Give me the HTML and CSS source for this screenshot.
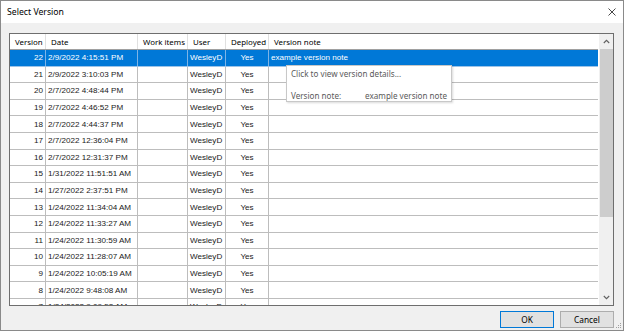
FILE: index.html
```html
<!DOCTYPE html>
<html lang="en">
<head>
    <meta charset="UTF-8">
    <title>Select Version</title>
    <link rel="stylesheet" href="styles.css">
</head>
<body>
    <div class="window">
        <div class="titlebar">
            <span class="title">Select Version</span>
            <svg class="close" width="8" height="8" viewBox="0 0 8 8">
                <path d="M0.5 0.5 L7.5 7.5 M7.5 0.5 L0.5 7.5" stroke="#333" stroke-width="0.9" fill="none"/>
            </svg>
        </div>

        <div class="body">
            <div class="grid-frame">
                <div class="grid">
                    <div class="row head">
                        <div class="cell">Version</div>
                        <div class="cell">Date</div>
                        <div class="cell">Work items</div>
                        <div class="cell">User</div>
                        <div class="cell">Deployed</div>
                        <div class="cell">Version note</div>
                    </div>
                    <div class="row selected">
                        <div class="cell num">22</div>
                        <div class="cell">2/9/2022 4:15:51 PM</div>
                        <div class="cell"></div>
                        <div class="cell">WesleyD</div>
                        <div class="cell mid">Yes</div>
                        <div class="cell">example version note</div>
                    </div>
                    <div class="row">
                        <div class="cell num">21</div>
                        <div class="cell">2/9/2022 3:10:03 PM</div>
                        <div class="cell"></div>
                        <div class="cell">WesleyD</div>
                        <div class="cell mid">Yes</div>
                        <div class="cell"></div>
                    </div>
                    <div class="row">
                        <div class="cell num">20</div>
                        <div class="cell">2/7/2022 4:48:44 PM</div>
                        <div class="cell"></div>
                        <div class="cell">WesleyD</div>
                        <div class="cell mid">Yes</div>
                        <div class="cell"></div>
                    </div>
                    <div class="row">
                        <div class="cell num">19</div>
                        <div class="cell">2/7/2022 4:46:52 PM</div>
                        <div class="cell"></div>
                        <div class="cell">WesleyD</div>
                        <div class="cell mid">Yes</div>
                        <div class="cell"></div>
                    </div>
                    <div class="row">
                        <div class="cell num">18</div>
                        <div class="cell">2/7/2022 4:44:37 PM</div>
                        <div class="cell"></div>
                        <div class="cell">WesleyD</div>
                        <div class="cell mid">Yes</div>
                        <div class="cell"></div>
                    </div>
                    <div class="row">
                        <div class="cell num">17</div>
                        <div class="cell">2/7/2022 12:36:04 PM</div>
                        <div class="cell"></div>
                        <div class="cell">WesleyD</div>
                        <div class="cell mid">Yes</div>
                        <div class="cell"></div>
                    </div>
                    <div class="row">
                        <div class="cell num">16</div>
                        <div class="cell">2/7/2022 12:31:37 PM</div>
                        <div class="cell"></div>
                        <div class="cell">WesleyD</div>
                        <div class="cell mid">Yes</div>
                        <div class="cell"></div>
                    </div>
                    <div class="row">
                        <div class="cell num">15</div>
                        <div class="cell">1/31/2022 11:51:51 AM</div>
                        <div class="cell"></div>
                        <div class="cell">WesleyD</div>
                        <div class="cell mid">Yes</div>
                        <div class="cell"></div>
                    </div>
                    <div class="row">
                        <div class="cell num">14</div>
                        <div class="cell">1/27/2022 2:37:51 PM</div>
                        <div class="cell"></div>
                        <div class="cell">WesleyD</div>
                        <div class="cell mid">Yes</div>
                        <div class="cell"></div>
                    </div>
                    <div class="row">
                        <div class="cell num">13</div>
                        <div class="cell">1/24/2022 11:34:04 AM</div>
                        <div class="cell"></div>
                        <div class="cell">WesleyD</div>
                        <div class="cell mid">Yes</div>
                        <div class="cell"></div>
                    </div>
                    <div class="row">
                        <div class="cell num">12</div>
                        <div class="cell">1/24/2022 11:33:27 AM</div>
                        <div class="cell"></div>
                        <div class="cell">WesleyD</div>
                        <div class="cell mid">Yes</div>
                        <div class="cell"></div>
                    </div>
                    <div class="row">
                        <div class="cell num">11</div>
                        <div class="cell">1/24/2022 11:30:59 AM</div>
                        <div class="cell"></div>
                        <div class="cell">WesleyD</div>
                        <div class="cell mid">Yes</div>
                        <div class="cell"></div>
                    </div>
                    <div class="row">
                        <div class="cell num">10</div>
                        <div class="cell">1/24/2022 11:28:07 AM</div>
                        <div class="cell"></div>
                        <div class="cell">WesleyD</div>
                        <div class="cell mid">Yes</div>
                        <div class="cell"></div>
                    </div>
                    <div class="row">
                        <div class="cell num">9</div>
                        <div class="cell">1/24/2022 10:05:19 AM</div>
                        <div class="cell"></div>
                        <div class="cell">WesleyD</div>
                        <div class="cell mid">Yes</div>
                        <div class="cell"></div>
                    </div>
                    <div class="row">
                        <div class="cell num">8</div>
                        <div class="cell">1/24/2022 9:48:08 AM</div>
                        <div class="cell"></div>
                        <div class="cell">WesleyD</div>
                        <div class="cell mid">Yes</div>
                        <div class="cell"></div>
                    </div>
                    <div class="row">
                        <div class="cell num">7</div>
                        <div class="cell">1/24/2022 9:09:52 AM</div>
                        <div class="cell"></div>
                        <div class="cell">WesleyD</div>
                        <div class="cell mid">Yes</div>
                        <div class="cell"></div>
                    </div>
                </div>

                <div class="scrollbar">
                    <div class="arrow">
                        <svg width="7" height="5" viewBox="0 0 7 5"><path d="M0.8 4 L3.5 1.3 L6.2 4" stroke="#606060" stroke-width="1.1" fill="none"/></svg>
                    </div>
                    <div class="track">
                        <div class="thumb"></div>
                    </div>
                    <div class="arrow">
                        <svg width="7" height="5" viewBox="0 0 7 5"><path d="M0.8 1 L3.5 3.7 L6.2 1" stroke="#606060" stroke-width="1.1" fill="none"/></svg>
                    </div>
                </div>

                <!-- hover tooltip over the note column -->
                <div class="tooltip">
                    <div class="tip-title">Click to view version details...</div>
                    <div class="tip-line">
                        <span>Version note:</span>
                        <span>example version note</span>
                    </div>
                </div>
            </div>

            <div class="actions">
                <button class="btn default">OK</button>
                <button class="btn">Cancel</button>
            </div>
        </div>

        <svg class="grip" width="7" height="7" viewBox="0 0 7 7">
            <rect x="5" y="1" width="1" height="1" fill="#a0a0a0"/>
            <rect x="3" y="3" width="1" height="1" fill="#a0a0a0"/>
            <rect x="5" y="3" width="1" height="1" fill="#a0a0a0"/>
            <rect x="1" y="5" width="1" height="1" fill="#a0a0a0"/>
            <rect x="3" y="5" width="1" height="1" fill="#a0a0a0"/>
            <rect x="5" y="5" width="1" height="1" fill="#a0a0a0"/>
        </svg>
    </div>
</body>
</html>
```

FILE: styles.css
```css
body {
    margin: 0;
    font-family: 'Liberation Sans', Arial, sans-serif;
    background-color: #ffffff;
}
.window {
    position: relative;
    width: 624px;
    height: 331px;
    box-sizing: border-box;
    border: 1px solid #8a8a8a;
    display: flex;
    flex-direction: column;
    background-color: #f0f0f0;
}
.titlebar {
    height: 22px;
    background-color: #ffffff;
    display: flex;
    align-items: center;
    justify-content: space-between;
    padding: 0 7px 0 6px;
}
.title {
    font-family: 'Noto Sans', 'Open Sans', sans-serif;
    font-size: 8.7px;
    color: #000;
}
.body {
    flex: 1;
    display: flex;
    flex-direction: column;
    padding: 10px 9px 0 8px;
}
.grid-frame {
    position: relative;
    height: 271px;
    border: 1px solid #6e6e6e;
    background-color: #ffffff;
    display: flex;
}
.grid {
    flex: 1;
    overflow: hidden;
}
.row {
    display: grid;
    grid-template-columns: 36px 92px 50px 38px 43px 1fr;
    height: 16.6px;
    box-sizing: border-box;
    border-bottom: 1px solid #bdbdbd;
    font-size: 8.1px;
    color: #1a1a1a;
}
.row.head {
    height: 16px;
    border-bottom: 1px solid #a0a0a0;
    font-family: 'Noto Sans', 'Open Sans', sans-serif;
    font-size: 7.9px;
    color: #000;
}
.cell {
    display: flex;
    align-items: center;
    padding: 0 2px;
    border-right: 1px solid #bdbdbd;
    white-space: nowrap;
    overflow: hidden;
}
.cell:last-child {
    border-right: none;
}
.head .cell {
    padding-left: 5px;
    border-right-color: #e0e0e0;
}
.cell.num {
    justify-content: flex-end;
}
.cell.mid {
    justify-content: center;
}
.row.selected {
    background-color: #0078d7;
    color: #ffffff;
    border-bottom-color: #9cc3e8;
}
.row.selected .cell {
    border-right-color: #7fb4e6;
}
.scrollbar {
    width: 14px;
    background-color: #f0f0f0;
    border-left: 1px solid #ffffff;
    display: flex;
    flex-direction: column;
}
.arrow {
    height: 15px;
    display: flex;
    align-items: center;
    justify-content: center;
}
.track {
    flex: 1;
    position: relative;
}
.thumb {
    position: absolute;
    left: 1px;
    right: 0;
    top: 0;
    height: 168px;
    background-color: #cdcdcd;
}
.tooltip {
    position: absolute;
    left: 276px;
    top: 31px;
    width: 166px;
    height: 37px;
    box-sizing: border-box;
    border: 1px solid #c8c8c8;
    background-color: #ffffff;
    box-shadow: 1px 1px 2px rgba(0,0,0,0.15);
    font-family: 'Noto Sans', 'Open Sans', sans-serif;
    font-size: 8.1px;
    color: #5a5a5a;
    padding: 2px 4px 0 4px;
}
.tip-title {
    height: 16px;
    line-height: 12px;
}
.tip-line {
    display: flex;
    justify-content: space-between;
    margin-top: 6px;
}
.actions {
    display: flex;
    justify-content: flex-end;
    gap: 6px;
    margin-top: 5px;
}
.btn {
    width: 54px;
    height: 17px;
    box-sizing: border-box;
    border: 1px solid #adadad;
    background-color: #e1e1e1;
    font-family: 'Noto Sans', 'Open Sans', sans-serif;
    font-size: 8.3px;
    color: #000;
    padding: 0;
}
.btn.default {
    border-color: #0078d7;
}
.grip {
    position: absolute;
    right: 1px;
    bottom: 1px;
}
```
